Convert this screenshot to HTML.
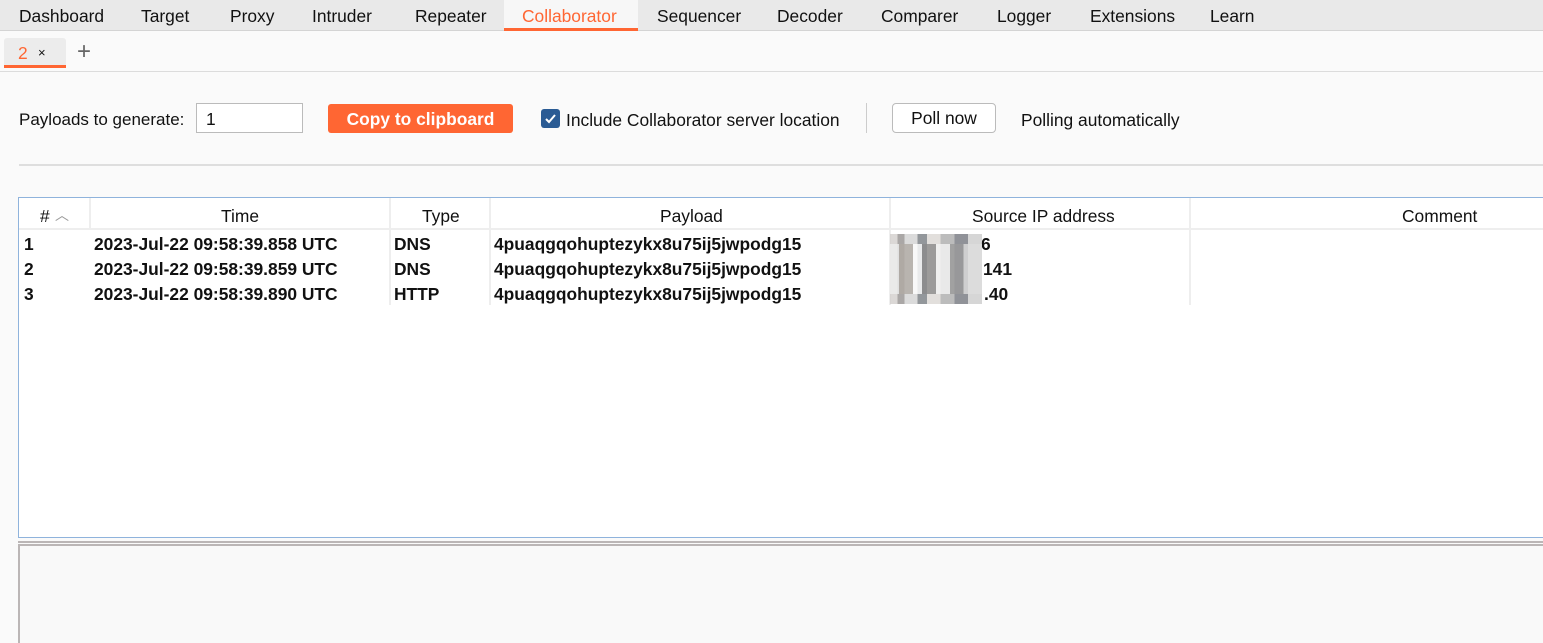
<!DOCTYPE html>
<html style="width:1543px;height:643px;overflow:hidden"><head><meta charset="utf-8"><style>
*{margin:0;padding:0;box-sizing:border-box}
body{width:1543px;height:643px;overflow:hidden;background:#fafafa;font-family:"Liberation Sans",sans-serif;font-size:17.4px;color:#111;position:relative}
.a{position:absolute;white-space:nowrap}
#top{left:0;top:0;width:1543px;height:31px;background:#e9e9e9;border-bottom:1px solid #d4d4d4}
.t{top:6px}
.cell{position:absolute;font-weight:bold;font-size:17.4px;white-space:nowrap}
</style></head><body>
<div class="a" id="top"></div>
<div class="a" style="left:504px;top:0;width:134px;height:31px;background:#f7f7f7;border-bottom:3px solid #ff6633"></div>
<div class="a t" style="left:19px">Dashboard</div>
<div class="a t" style="left:141px">Target</div>
<div class="a t" style="left:230px">Proxy</div>
<div class="a t" style="left:312px">Intruder</div>
<div class="a t" style="left:415px">Repeater</div>
<div class="a t" style="left:522px;color:#ff6633">Collaborator</div>
<div class="a t" style="left:657px">Sequencer</div>
<div class="a t" style="left:777px">Decoder</div>
<div class="a t" style="left:881px">Comparer</div>
<div class="a t" style="left:997px">Logger</div>
<div class="a t" style="left:1090px">Extensions</div>
<div class="a t" style="left:1210px">Learn</div>

<div class="a" style="left:4px;top:38px;width:62px;height:30px;background:#ececec;border-radius:3px 3px 0 0;border-bottom:3px solid #ff6633"></div>
<div class="a" style="left:18px;top:43px;color:#ff6633">2</div>
<div class="a" style="left:38px;top:45px;font-size:13px">×</div>
<div class="a" style="left:77px;top:38px;font-size:24px;color:#666">+</div>
<div class="a" style="left:0;top:71px;width:1543px;height:1px;background:#dcdcdc"></div>

<div class="a" style="left:19px;top:110px;font-size:17px">Payloads to generate:</div>
<div class="a" style="left:196px;top:103px;width:107px;height:30px;background:#fff;border:1px solid #bbb;padding:5px 9px">1</div>
<div class="a" style="left:328px;top:104px;width:185px;height:29px;background:#ff6633;border-radius:3px;color:#fff;font-weight:bold;text-align:center;line-height:30px">Copy to clipboard</div>
<div class="a" style="left:541px;top:109px;width:19px;height:19px;background:#2a5b94;border-radius:3px"><svg width="19" height="19"><path d="M5 10l3 3 6-7" stroke="#fff" stroke-width="2" fill="none"/></svg></div>
<div class="a" style="left:566px;top:110px">Include Collaborator server location</div>
<div class="a" style="left:866px;top:103px;width:1px;height:30px;background:#ccc"></div>
<div class="a" style="left:892px;top:103px;width:104px;height:30px;background:#fff;border:1px solid #bbb;border-radius:4px;text-align:center;line-height:29px">Poll now</div>
<div class="a" style="left:1021px;top:110px">Polling automatically</div>
<div class="a" style="left:19px;top:164px;width:1524px;height:2px;background:#dedede"></div>

<div class="a" style="left:18px;top:197px;width:1530px;height:341px;background:#fff;border:1px solid #8fb3dc"></div>
<div class="a" style="left:19px;top:198px;width:1524px;height:32px;border-bottom:2px solid #eee"></div>
<div class="a" style="left:89px;top:198px;width:2px;height:32px;background:#eee"></div>
<div class="a" style="left:389px;top:198px;width:2px;height:107px;background:#eee"></div>
<div class="a" style="left:489px;top:198px;width:2px;height:107px;background:#eee"></div>
<div class="a" style="left:889px;top:198px;width:2px;height:107px;background:#eee"></div>
<div class="a" style="left:1189px;top:198px;width:2px;height:107px;background:#eee"></div>
<div class="a" style="left:40px;top:206px">#</div><div class="a" style="left:55px;top:205px;color:#999;font-size:14px">︿</div>
<div class="a" style="left:221px;top:206px">Time</div>
<div class="a" style="left:422px;top:206px">Type</div>
<div class="a" style="left:660px;top:206px">Payload</div>
<div class="a" style="left:972px;top:206px">Source IP address</div>
<div class="a" style="left:1402px;top:206px">Comment</div>

<div class="cell" style="left:24px;top:234px">1</div>
<div class="cell" style="left:94px;top:234px">2023-Jul-22 09:58:39.858 UTC</div>
<div class="cell" style="left:394px;top:234px">DNS</div>
<div class="cell" style="left:494px;top:234px">4puaqgqohuptezykx8u75ij5jwpodg15</div>
<div class="cell" style="left:981px;top:234px">6</div>
<div class="cell" style="left:24px;top:259px">2</div>
<div class="cell" style="left:94px;top:259px">2023-Jul-22 09:58:39.859 UTC</div>
<div class="cell" style="left:394px;top:259px">DNS</div>
<div class="cell" style="left:494px;top:259px">4puaqgqohuptezykx8u75ij5jwpodg15</div>
<div class="cell" style="left:983px;top:259px">141</div>
<div class="cell" style="left:24px;top:284px">3</div>
<div class="cell" style="left:94px;top:284px">2023-Jul-22 09:58:39.890 UTC</div>
<div class="cell" style="left:394px;top:284px">HTTP</div>
<div class="cell" style="left:494px;top:284px">4puaqgqohuptezykx8u75ij5jwpodg15</div>
<div class="cell" style="left:984px;top:284px">.40</div>
<div class="a" style="left:890px;top:234px;width:92px;height:70px;background:linear-gradient(90deg,#cfcbc8 0 8%,#8e8a88 8% 16%,#cfcfcf 16% 30%,#6f747a 30% 40%,#d9d4d0 40% 55%,#a6a6a6 55% 70%,#6b6e75 70% 85%,#c8c8c8 85%);opacity:.75"></div>
<div class="a" style="left:890px;top:244px;width:92px;height:50px;background:linear-gradient(90deg,#eee 0 10%,#b0aaa4 10% 25%,#fff 25% 35%,#8a8a8a 35% 50%,#f4f4f4 50% 65%,#9a9a9a 65% 80%,#ddd 80%);opacity:.8"></div>

<div class="a" style="left:18px;top:541px;width:1525px;height:2px;background:#bbb6b6"></div>
<div class="a" style="left:18px;top:544px;width:1525px;height:99px;border-left:2px solid #bbb6b6;border-top:2px solid #bbb6b6;background:#f9f9f9"></div>
</body></html>
